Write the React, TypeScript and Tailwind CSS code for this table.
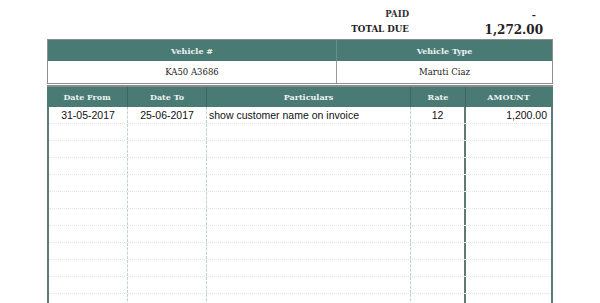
import React from "react";

const serif = { fontFamily: '"DejaVu Serif", "Liberation Serif", serif' };
const sans = { fontFamily: '"Liberation Sans", Arial, sans-serif' };

const cols = [
  { w: "w-[81px]", label: "Date From", border: "border-r border-dashed border-r-[#bcd3cf]" },
  { w: "w-[79px]", label: "Date To", border: "border-r border-dashed border-r-[#bcd3cf]" },
  { w: "w-[204px]", label: "Particulars", border: "border-r border-dashed border-r-[#bcd3cf]" },
  { w: "w-[55px]", label: "Rate", border: "border-r-2 border-r-[#5d7a76]" },
  { w: "w-[85px]", label: "AMOUNT", border: "" },
];

export default function App() {
  const emptyRows = Array.from({ length: 11 });
  return (
    <div className="w-[600px] h-[303px] bg-white overflow-hidden relative">
      {/* Summary */}
      <div className="pt-[9px] flex flex-col text-[#222]" style={serif}>
        <div className="flex items-center h-[11px]">
          <div className="w-[409px] text-right text-[8.5px] font-bold text-[#333]">PAID</div>
          <div className="w-[136px] text-right text-[10px] font-bold pr-[9px]">-</div>
        </div>
        <div className="flex items-center h-[17px] mt-[1px]">
          <div className="w-[409px] text-right text-[8.7px] font-bold">TOTAL DUE</div>
          <div className="w-[136px] text-right text-[12px] font-bold pr-[2px]">1,272.00</div>
        </div>
      </div>

      {/* Vehicle table */}
      <div className="ml-[47px] mt-[1px] w-[506px] border border-[#8e8e8e]">
        <div className="flex h-[21px] bg-[#497a74] text-[#eef3f2] text-[8px] font-bold" style={serif}>
          <div className="w-[289px] flex items-center justify-center border-r border-r-[#6b8f8a]">Vehicle #</div>
          <div className="flex-1 flex items-center justify-center">Vehicle Type</div>
        </div>
        <div className="flex h-[22px] text-[#222] text-[8.5px]" style={serif}>
          <div className="w-[289px] flex items-center justify-center border-r border-r-[#9a9a9a]">KA50 A3686</div>
          <div className="flex-1 flex items-center justify-center">Maruti Ciaz</div>
        </div>
      </div>

      {/* Line items table */}
      <div className="ml-[47px] mt-[1px] w-[506px] border-t-2 border-t-[#8a8a8a]">
        <div className="flex h-[20px] bg-[#497a74] text-[#eef3f2] text-[8px] font-bold" style={serif}>
          {cols.map((c, i) => (
            <div
              key={i}
              className={`${c.w} ${i < 4 ? "border-r border-r-[#3d6660]" : ""} flex items-center justify-center`}
            >
              {c.label}
            </div>
          ))}
        </div>
        <div className="border-l-2 border-r-2 border-l-[#5d7a76] border-r-[#5d7a76] w-[506px]">
          <div className="flex h-[17px] border-b border-dotted border-b-[#dde8e6] text-[10.5px] text-[#111]" style={sans}>
            <div className={`w-[79px] ${cols[0].border} flex items-center justify-center pt-[1px]`}>31-05-2017</div>
            <div className={`${cols[1].w} ${cols[1].border} flex items-center justify-center pt-[1px]`}>25-06-2017</div>
            <div className={`${cols[2].w} ${cols[2].border} flex items-center pl-[2px] pt-[1px]`}>show customer name on invoice</div>
            <div className={`${cols[3].w} ${cols[3].border} flex items-center justify-center pt-[1px]`}>12</div>
            <div className="flex-1 flex items-center justify-end pr-[4px] pt-[1px]">1,200.00</div>
          </div>
          {emptyRows.map((_, r) => (
            <div key={r} className="flex h-[17px] border-b border-dotted border-b-[#dde8e6]">
              <div className={`w-[79px] ${cols[0].border}`} />
              <div className={`${cols[1].w} ${cols[1].border}`} />
              <div className={`${cols[2].w} ${cols[2].border}`} />
              <div className={`${cols[3].w} ${cols[3].border}`} />
              <div className="flex-1" />
            </div>
          ))}
        </div>
      </div>
    </div>
  );
}
